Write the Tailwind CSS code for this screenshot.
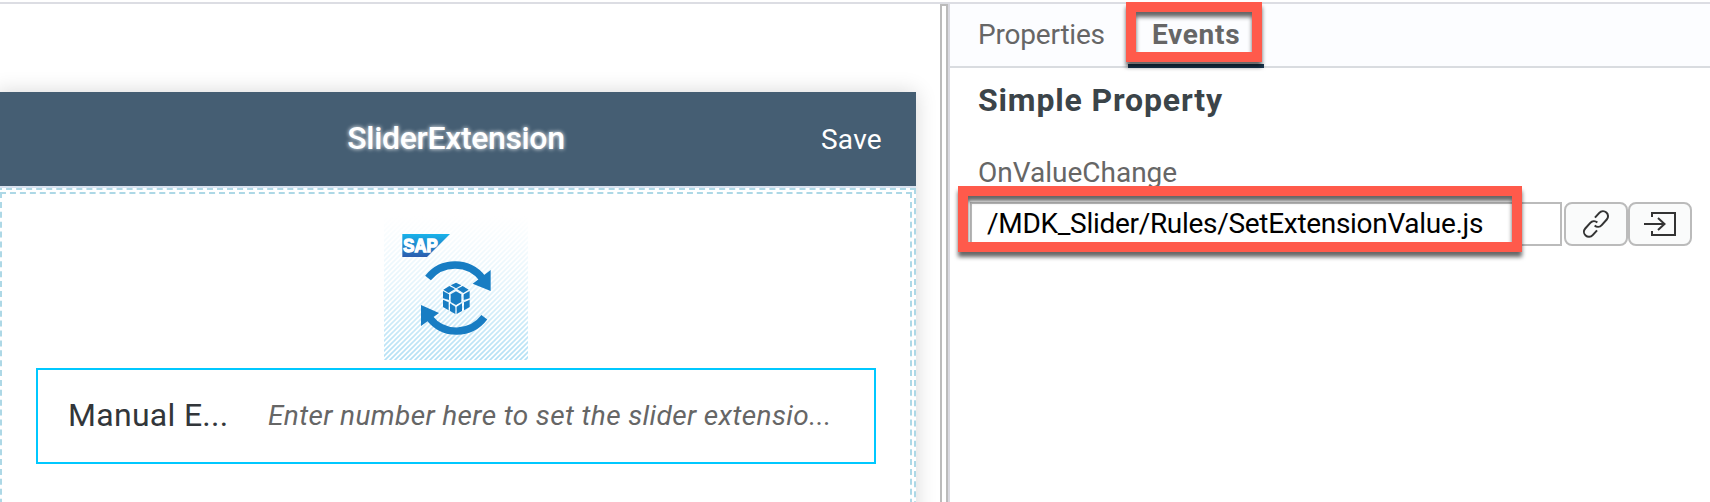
<!DOCTYPE html>
<html lang="en">
<head>
<meta charset="utf-8">
<title>SliderExtension</title>
<script src="https://cdn.jsdelivr.net/npm/@tailwindcss/browser@4"></script>
</head>
<body class="h-[502px] overflow-hidden bg-white font-['Roboto',sans-serif] text-[28px] leading-8">
<div class="flex h-[502px] flex-col overflow-hidden pt-0.5">
  <div class="h-0.5 shrink-0 bg-[#dcdde3]"></div>
  <div class="flex min-h-0 flex-1">
    <main class="w-[940px] shrink-0 overflow-hidden pt-[88px]">
      <section class="-ml-1 h-[460px] w-[920px] bg-[#d9e3f0] shadow-[0_0_20px_rgba(0,0,0,0.16)]">
        <header class="grid h-[94px] grid-cols-[1fr_auto_1fr] items-center bg-[#455e73] text-white">
          <span></span>
          <h1 class="pb-0.5 text-[32px] leading-10 font-medium tracking-[-0.35px] [text-shadow:0_0_4px_#fff]">SliderExtension</h1>
          <span class="mr-[34px] justify-self-end pt-0.5 tracking-[0.3px]">Save</span>
        </header>
        <div class="mt-0.5 h-[380px] border-2 border-dashed border-[#add8e6] bg-white p-0.5">
          <div class="flex h-full flex-col items-center border-2 border-dashed border-[#add8e6] pt-[22px]">
            <svg class="h-36 w-36 shrink-0" viewBox="42 -12 432 432">
              <defs>
                <pattern id="stripe" width="15" height="15" patternUnits="userSpaceOnUse"><path d="M-3 3L3 -3M-3 18L18 -3M12 18L18 12" stroke="#b3e0f5" stroke-width="5"/></pattern>
                <linearGradient id="fade" x1="0" y1="0" x2="0" y2="1"><stop offset="0" stop-color="#fff"/><stop offset="0.5" stop-color="#fff" stop-opacity="0.65"/><stop offset="1" stop-color="#fff" stop-opacity="0"/></linearGradient>
                <linearGradient id="sap" x1="0" y1="0" x2="0" y2="1"><stop offset="0" stop-color="#18b3ea"/><stop offset="1" stop-color="#2b5cae"/></linearGradient>
              </defs>
              <path fill="url(#stripe)" d="M42-12h432v432H42z"/>
              <path fill="url(#fade)" d="M42-12h432v432H42z"/>
              <path fill="url(#sap)" d="M97 42h143l-69 69H97z"/>
              <text x="100" y="96" textLength="103" lengthAdjust="spacingAndGlyphs" fill="#fff" stroke="#fff" stroke-width="4" class="font-['Liberation_Sans'] text-[54px] font-bold">SAP</text>
              <g fill="none" stroke="#187dc3" stroke-width="22"><path d="M174 174A104 104 0 0 1 338 176"/><path d="M343 292A104 104 0 0 1 178 293"/></g>
              <path fill="#187dc3" d="M362 150v63l-54-22zM153 255v63l54-39z"/>
              <g fill="#187dc3">
                <path d="M258 188l16 8-16 9-16-9z"/>
                <path d="M258 214l16 9v23l-16 9-16-9v-23z"/>
                <path d="M238 198l17 9-19 12-16-10zM278 198l-17 9 19 12 16-10z"/>
                <path d="M219 213l18 10v17l-18-5zM299 213l-18 10v17l18-5z"/>
                <path d="M219 239l17 8v24l-17-10zM299 239l-17 8v24l17-10z"/>
                <path d="M240 250l16 10v22l-16-9zM276 250l-16 10v22l16-9z"/>
              </g>
            </svg>
            <div class="mt-2 flex h-24 w-[840px] shrink-0 items-center border-2 border-[#00c8ff] pl-[30px]">
              <span class="w-[200px] pb-0.5 text-[32px] leading-10 tracking-[0.3px] text-[#32363a]">Manual E...</span>
              <span class="tracking-[0.38px] whitespace-nowrap text-[#666] italic">Enter number here to set the slider extensio...</span>
            </div>
          </div>
        </div>
      </section>
    </main>
    <div class="w-2 shrink-0 border-2 border-b-0 border-[#bbb] bg-white"></div>
    <aside class="min-w-0 flex-1 border-l-2 border-[#d9d9e0]">
      <nav class="flex h-16 items-start border-b-2 border-[#d9dce0] bg-[#fcfdff] pl-7 text-[#666]">
        <span class="mt-[15px] w-[150px] tracking-[-0.2px]">Properties</span>
        <div class="relative h-16 w-[136px] border-b-4 border-[#1c3a54] pt-[15px] pl-6 font-bold tracking-[0.7px]">Events
          <div class="absolute -top-0.5 -left-0.5 h-[60px] w-[136px] border-[10px] border-[#ff5a4b] drop-shadow-[0_5px_2px_rgba(0,0,0,0.6)]"></div>
        </div>
      </nav>
      <div class="pl-7">
        <h2 class="mt-3 text-[32px] leading-10 font-bold tracking-[0.85px] text-[#3b4449]">Simple Property</h2>
        <label class="mt-[37px] block text-[#666]">OnValueChange</label>
        <div class="relative -ml-2 mt-[13px] flex gap-0.5">
          <div class="h-11 w-[592px] border-2 border-[#bbb] bg-white pt-1 pl-[15px] tracking-[-0.3px] text-black">/MDK_Slider/Rules/SetExtensionValue.js</div>
          <div class="flex">
            <button class="flex h-11 w-16 items-center justify-center rounded-lg border-2 border-[#bbb] bg-[#fafbfb]">
              <svg class="h-8 w-8" viewBox="0 0 32 32" fill="none" stroke="#333" stroke-width="2"><g transform="rotate(-48 16 16)"><path d="M12 21H5.500a5 5 0 0 1 0-10H13a5 5 0 0 1 5 5"/><path d="M20 11h6.500a5 5 0 0 1 0 10H19a5 5 0 0 1-5-5"/></g></svg>
            </button>
            <button class="flex h-11 w-16 items-center justify-center rounded-lg border-2 border-[#bbb] bg-[#fafbfb]">
              <svg class="h-8 w-8" viewBox="0 0 32 32" fill="none" stroke="#333" stroke-width="2"><path d="M8 9V5h23v22H8v-4M0 16h20M14 10l6.500 6-6.500 6"/></svg>
            </button>
          </div>
          <div class="absolute -top-4 -left-3 h-[66px] w-[564px] border-[10px] border-[#ff5a4b] drop-shadow-[0_5px_2px_rgba(0,0,0,0.6)]"></div>
        </div>
      </div>
    </aside>
  </div>
</div>
</body>
</html>
